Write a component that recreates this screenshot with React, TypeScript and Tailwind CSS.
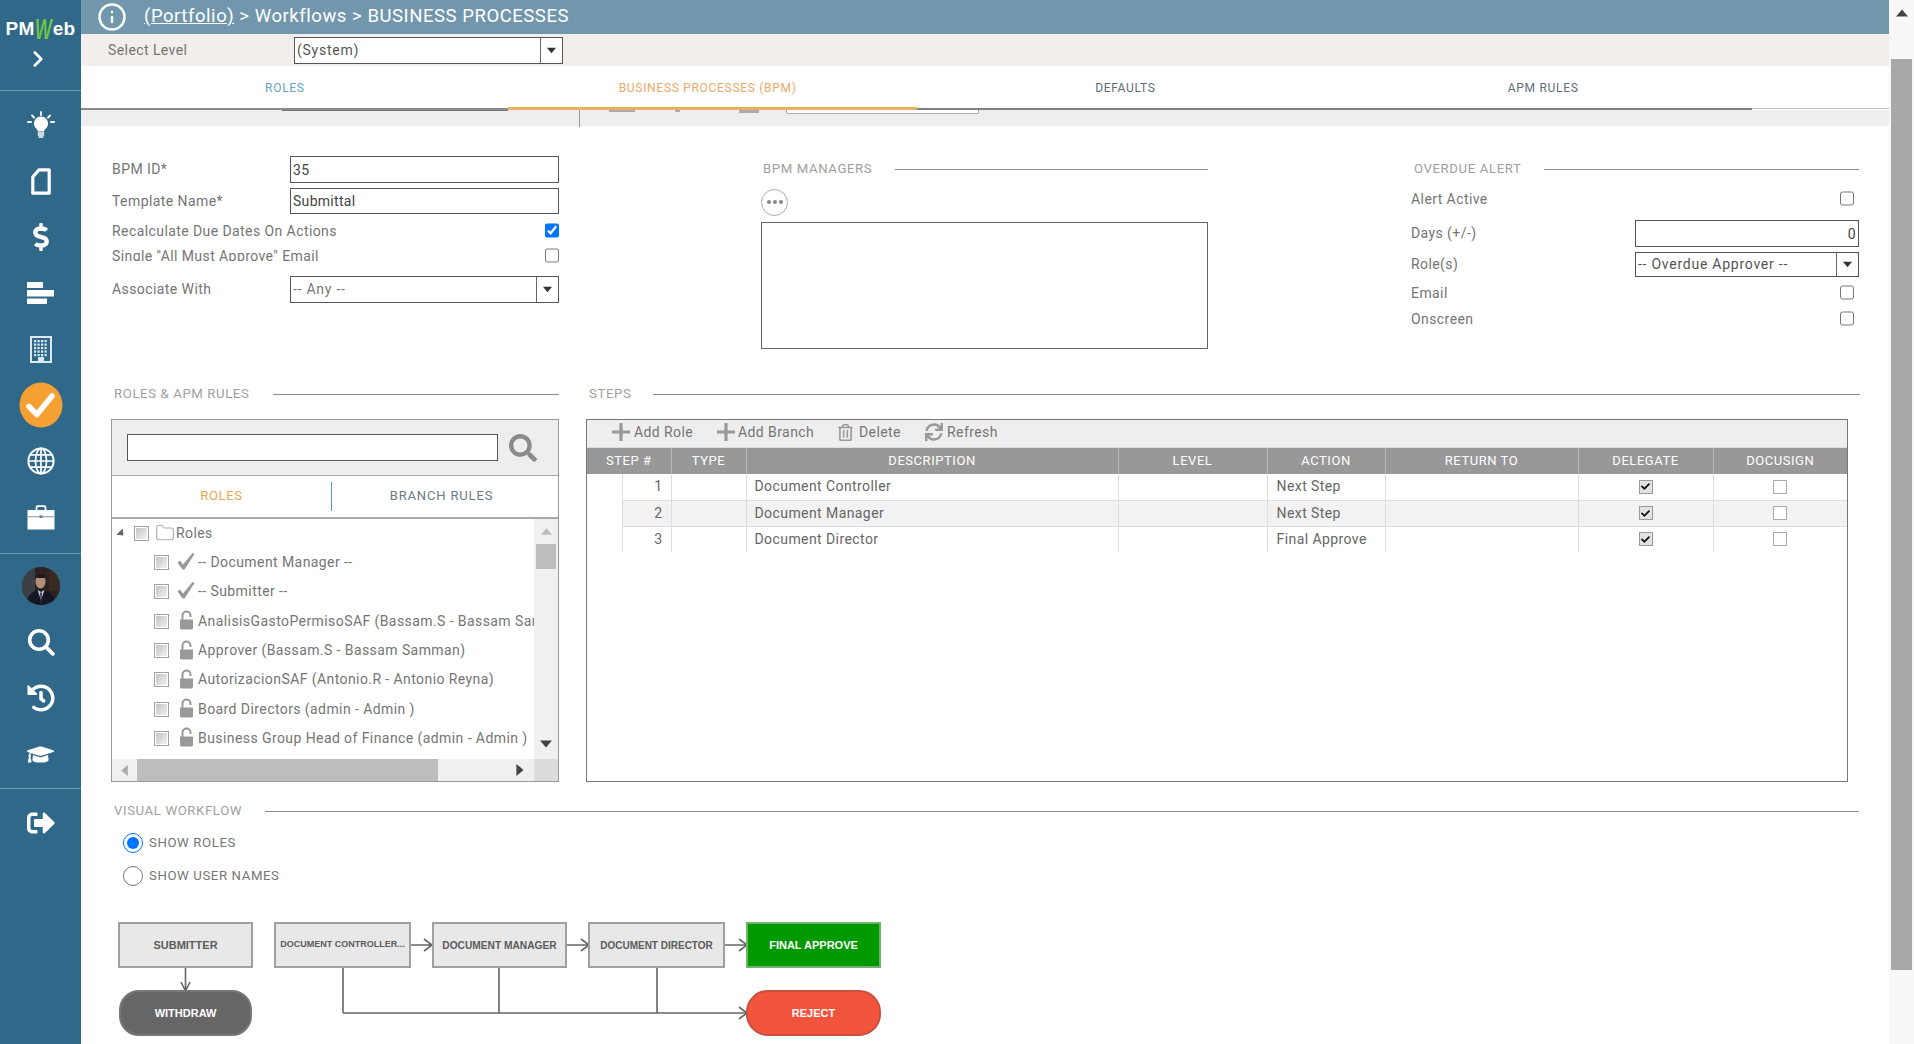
import React from "react";
import { FaDollarSign, FaHistory, FaGraduationCap, FaSignOutAlt, FaSearch, FaRegTrashAlt, FaSync, FaCheck } from "react-icons/fa";
import { Info, Folder, ChevronRight } from "lucide-react";

const font = { fontFamily: "Roboto, 'Liberation Sans', sans-serif" };

function Tri({ dir, cls }: { dir: "up" | "down" | "left" | "right"; cls: string }) {
  const pts = { up: "0,8 5,2 10,8", down: "0,2 10,2 5,8", left: "8,0 8,10 2,5", right: "2,0 2,10 8,5" }[dir];
  return (
    <svg viewBox="0 0 10 10" className={cls}>
      <polygon points={pts} fill="currentColor" />
    </svg>
  );
}

function SideItem({ children }: { children: React.ReactNode }) {
  return <div className="h-[56px] flex items-center justify-center text-white">{children}</div>;
}

function Sidebar() {
  return (
    <div className="w-[81px] shrink-0 bg-[#2f6889] flex flex-col">
      <div className="h-[91px] border-b border-[#6a9ab5] flex flex-col items-center shrink-0">
        <div className="h-[40px] pt-[19px] flex items-center justify-center text-white font-bold text-[19px] tracking-[0.3px]" style={{ fontFamily: "'Liberation Sans', sans-serif" }}>
          <span>PM</span>
          <span className="inline-block text-[#6cc644] italic text-[29px] leading-[27px] w-[18px] scale-x-[0.62] origin-left">W</span>
          <span>eb</span>
        </div>
        <ChevronRight className="w-[26px] h-[26px] text-white mt-[6px] mr-[5px]" strokeWidth={2.4} />
      </div>
      <div className="pt-[6px]">
        <SideItem>
          <svg viewBox="0 0 28 28" className="w-[28px] h-[28px]">
            <g stroke="#fff" strokeWidth="1.8" strokeLinecap="round">
              <path d="M14 1v3M5 4.5l2 2M23 4.5l-2 2M1 11h3M24 11h3" />
            </g>
            <path d="M14 5.5a7 7 0 0 0-4.6 12.3c1 .9 1.3 1.7 1.4 2.7h6.4c.1-1 .4-1.8 1.4-2.7A7 7 0 0 0 14 5.5z" fill="#fff" />
            <path d="M10.8 22h6.4M10.8 24h6.4M11.6 26h4.8" stroke="#fff" strokeWidth="1.3" />
          </svg>
        </SideItem>
        <SideItem>
          <svg viewBox="0 0 20 27" className="w-[20px] h-[27px]">
            <path d="M8 1.8H18.2V25.2H1.8V9Z" fill="none" stroke="#fff" strokeWidth="3.2" strokeLinejoin="round" />
          </svg>
        </SideItem>
        <SideItem><FaDollarSign className="w-[26px] h-[28px]" /></SideItem>
        <SideItem>
          <svg viewBox="0 0 27 22" className="w-[27px] h-[22px]">
            <rect x="0" y="0" width="16" height="6" fill="#fff" />
            <rect x="0" y="8" width="27" height="6.5" fill="#fff" />
            <rect x="0" y="16.5" width="20" height="5.5" fill="#fff" />
          </svg>
        </SideItem>
        <SideItem>
          <svg viewBox="0 0 22 27" className="w-[22px] h-[27px]">
            <rect x="1" y="1" width="20" height="25" fill="none" stroke="#dce8ef" strokeWidth="2" />
            <g fill="#dce8ef">
              {[4, 7.5, 11, 14.5].map((x) =>
                [4, 7.5, 11, 14.5, 18].map((y) => <rect key={`${x}-${y}`} x={x} y={y} width="2.2" height="2.2" />)
              )}
              <rect x="8" y="21" width="6" height="5" />
            </g>
          </svg>
        </SideItem>
        <SideItem>
          <svg viewBox="0 0 44 46" className="w-[44px] h-[46px]">
            <ellipse cx="22" cy="23" rx="21.5" ry="22.5" fill="#f5a033" />
            <path d="M10 24.5l8 8L33 14" fill="none" stroke="#fff" strokeWidth="5.5" strokeLinecap="round" strokeLinejoin="round" />
          </svg>
        </SideItem>
        <SideItem>
          <svg viewBox="0 0 28 28" className="w-[28px] h-[28px]" fill="none" stroke="#fff" strokeWidth="1.7">
            <circle cx="14" cy="14" r="12.6" strokeWidth="2" />
            <ellipse cx="14" cy="14" rx="5.5" ry="12.6" />
            <path d="M14 1.4v25.2M1.4 14h25.2M3 7.8h22M3 20.2h22" />
          </svg>
        </SideItem>
        <SideItem>
          <svg viewBox="0 0 28 25" className="w-[28px] h-[25px]">
            <path d="M9.5 5V2.6a1.4 1.4 0 0 1 1.4-1.4h6.2a1.4 1.4 0 0 1 1.4 1.4V5" fill="none" stroke="#fff" strokeWidth="1.8" />
            <rect x="0.5" y="5" width="27" height="19.5" fill="#fff" />
            <rect x="0.5" y="11" width="27" height="1.4" fill="#9fb4c1" />
            <rect x="12.5" y="10.4" width="3" height="2.6" fill="#5d7f94" />
          </svg>
        </SideItem>
      </div>
      <div className="mt-[8px] h-[5px] border-t border-[#6a9ab5]" />
      <SideItem>
        <svg viewBox="0 0 38 38" className="w-[38px] h-[38px]">
          <defs>
            <clipPath id="av"><circle cx="19" cy="19" r="19" /></clipPath>
            <filter id="avb"><feGaussianBlur stdDeviation="0.6" /></filter>
          </defs>
          <g clipPath="url(#av)">
            <rect width="38" height="38" fill="#2a2320" />
            <g filter="url(#avb)">
              <rect x="0" y="0" width="13" height="38" fill="#3a4045" />
              <rect x="27" y="0" width="11" height="24" fill="#3b2a24" />
              <ellipse cx="18.5" cy="14.5" rx="5" ry="7" fill="#b38d7c" />
              <path d="M13 12c0-6 11-6.500 11.500 0l-1-1.500c-3 .6-6 .8-9.500 0z" fill="#1d1715" />
              <path d="M4 38c1-10 7-15 15-15s14 5 15 15z" fill="#161821" />
              <path d="M15.500 23l3.500 10 3.500-10-3.500 2z" fill="#c5cad8" />
              <path d="M18 25.500l1 12.500 1-12.500z" fill="#2a3556" />
            </g>
          </g>
        </svg>
      </SideItem>
      <SideItem>
        <svg viewBox="0 0 28 28" className="w-[28px] h-[28px]" fill="none" stroke="#fff">
          <circle cx="12" cy="12" r="9.3" strokeWidth="3.6" />
          <path d="M18.8 18.800l7 7" strokeWidth="3.8" strokeLinecap="round" />
        </svg>
      </SideItem>
      <SideItem><FaHistory className="w-[28px] h-[28px]" /></SideItem>
      <SideItem><FaGraduationCap className="w-[27px] h-[27px]" /></SideItem>
      <div className="mt-[6px] h-[7px] border-t border-[#6a9ab5]" />
      <SideItem><FaSignOutAlt className="w-[28px] h-[28px]" /></SideItem>
    </div>
  );
}

function SelectBox({ value, w, h, arrow, dark }: { value: string; w: string; h: string; arrow: string; dark?: boolean }) {
  return (
    <div className={`${w} ${h} border border-[#555] bg-white flex items-center text-[14px] ${dark ? "text-[#555]" : "text-[#777]"}`}>
      <span className="flex-1 pl-[2px] tracking-[0.75px]">{value}</span>
      <span className={`${arrow} h-full border-l border-[#666] flex items-center justify-center text-[#333]`}>
        <Tri dir="down" cls="w-[9px] h-[9px]" />
      </span>
    </div>
  );
}

function Title({ text, cls, gap }: { text: string; cls: string; gap: string }) {
  return (
    <div className={`flex items-center h-[26px] ${cls}`}>
      <span className="text-[13.2px] text-[#a0a0a0] uppercase tracking-[0.6px] whitespace-nowrap">{text}</span>
      <span className={`flex-1 h-px bg-[#8a8a8a] ${gap}`} />
    </div>
  );
}

const labelCls = "text-[14px] text-[#757575] tracking-[0.42px] whitespace-nowrap";
const inputCls = "border border-[#555] bg-white text-[14px] text-[#444] pl-[2px] tracking-[0.3px] outline-none";

function Check({ checked, cls }: { checked?: boolean; cls?: string }) {
  return <input type="checkbox" readOnly checked={!!checked} className={`w-[14px] h-[15px] m-0 ${cls ?? ""}`} />;
}

function TopForm() {
  return (
    <div className="flex pt-[30px] h-[255px]">
      <div className="ml-[31px] w-[447px] shrink-0">
        <div className="flex items-center justify-between h-[27px]">
          <span className={labelCls}>BPM ID*</span>
          <input readOnly value="35" className={`${inputCls} w-[269px] h-[27px]`} />
        </div>
        <div className="flex items-center justify-between h-[26px] mt-[5px]">
          <span className={labelCls}>Template Name*</span>
          <input readOnly value="Submittal" className={`${inputCls} w-[269px] h-[26px]`} />
        </div>
        <div className="flex items-center justify-between h-[34px]">
          <span className={labelCls}>Recalculate Due Dates On Actions</span>
          <Check checked cls="mb-[1px]" />
        </div>
        <div className="flex items-start justify-between h-[16px]">
          <span className={`${labelCls} h-[13px] overflow-hidden leading-[16px]`}>Single "All Must Approve" Email</span>
          <Check />
        </div>
        <div className="flex items-center justify-between h-[27px] mt-[12px]">
          <span className={labelCls}>Associate With</span>
          <SelectBox value="-- Any --" w="w-[269px]" h="h-[27px]" arrow="w-[22px]" />
        </div>
      </div>
      <div className="ml-[202px] w-[447px] shrink-0">
        <Title text="BPM Managers" cls="pl-[2px]" gap="ml-[23px]" />
        <div className="w-[27px] h-[27px] rounded-full border border-[#aaa] mt-[6.5px] flex items-center justify-center gap-[2px]">
          <span className="w-[4px] h-[4px] rounded-full bg-[#888]" />
          <span className="w-[4px] h-[4px] rounded-full bg-[#888]" />
          <span className="w-[4px] h-[4px] rounded-full bg-[#888]" />
        </div>
        <div className="mt-[6.5px] h-[127px] border border-[#666] bg-white" />
      </div>
      <div className="ml-[203px] w-[448px] shrink-0">
        <Title text="Overdue Alert" cls="pl-[3px]" gap="ml-[23px]" />
        <div className="flex items-center justify-between h-[34px] pr-[5px]">
          <span className={labelCls}>Alert Active</span>
          <Check cls="mb-[1px]" />
        </div>
        <div className="flex items-center justify-between h-[27px] mt-[4px]">
          <span className={labelCls}>Days (+/-)</span>
          <input readOnly value="0" className={`${inputCls} w-[224px] h-[27px] text-right pr-[2px]`} />
        </div>
        <div className="flex items-center justify-between h-[25px] mt-[5px]">
          <span className={labelCls}>Role(s)</span>
          <SelectBox value="-- Overdue Approver --" w="w-[224px]" h="h-[25px]" arrow="w-[22px]" dark />
        </div>
        <div className="flex items-center justify-between h-[32px] pr-[5px]">
          <span className={labelCls}>Email</span>
          <Check cls="mb-[1px]" />
        </div>
        <div className="flex items-center justify-between h-[20px] pr-[5px]">
          <span className={labelCls}>Onscreen</span>
          <Check cls="mb-[1px]" />
        </div>
      </div>
    </div>
  );
}

function TreeBox() {
  return (
    <span className="w-[15px] h-[15px] shrink-0 border border-[#a0a0a0] bg-white p-[1px] flex">
      <span className="flex-1 bg-gradient-to-br from-[#c4c4c4] to-[#f2f2f2]" />
    </span>
  );
}

function CheckMark() {
  return (
    <svg viewBox="0 0 18 17" className="w-[18px] h-[17px] text-[#999]">
      <path d="M0.500 9.500L3 7.500L6 11.500L15.500 0L17.500 1L7.500 16.500H5.500Z" fill="currentColor" />
    </svg>
  );
}

function LockOpen() {
  return (
    <svg viewBox="0 0 15 20" className="w-[15px] h-[20px] text-[#999]">
      <path d="M3.500 10V5.500a4 4 0 0 1 8 0V7" fill="none" stroke="currentColor" strokeWidth="2" />
      <path d="M1 9.500H14V18a1.500 1.500 0 0 1-1.500 1.500h-10A1.500 1.500 0 0 1 1 18Z" fill="currentColor" />
    </svg>
  );
}

const treeRows: [string, "check" | "lock"][] = [
  ["-- Document Manager --", "check"],
  ["-- Submitter --", "check"],
  ["AnalisisGastoPermisoSAF (Bassam.S - Bassam Samman)", "lock"],
  ["Approver (Bassam.S - Bassam Samman)", "lock"],
  ["AutorizacionSAF (Antonio.R - Antonio Reyna)", "lock"],
  ["Board Directors (admin - Admin )", "lock"],
  ["Business Group Head of Finance (admin - Admin )", "lock"],
];

function RolesPanel() {
  return (
    <div className="w-[448px] h-[363px] shrink-0 border border-[#999] flex flex-col bg-white">
      <div className="h-[56px] bg-[#eeeeee] border-b border-[#aaa] flex items-center pl-[15px] shrink-0">
        <div className="w-[371px] h-[27px] border border-[#555] bg-white" />
        <FaSearch className="w-[28px] h-[28px] text-[#8a8a8a] ml-[11px]" />
      </div>
      <div className="h-[43px] border-b-2 border-[#aaa] flex items-center shrink-0 pb-[1px]">
        <div className="w-[219px] text-center text-[13px] text-[#eaa850] tracking-[0.7px]">ROLES</div>
        <div className="w-px h-[29px] bg-[#5a95bd]" />
        <div className="flex-1 text-center text-[13px] text-[#6c7a86] tracking-[0.85px] pr-[7px]">BRANCH RULES</div>
      </div>
      <div className="flex h-[240px] shrink-0">
        <div className="w-[422px] overflow-hidden">
          <div className="h-[29px] flex items-center">
            <Tri dir="down" cls="w-[9px] h-[9px] text-[#666] ml-[5px] rotate-[-45deg]" />
            <span className="ml-[8px]"><TreeBox /></span>
            <Folder className="w-[20px] h-[20px] text-[#aaa] ml-[6px] mb-[2px]" strokeWidth={1.3} />
            <span className={`${labelCls} ml-[1px]`}>Roles</span>
          </div>
          {treeRows.map(([t, kind]) => (
            <div key={t} className="h-[29.3px] flex items-center">
              <span className="ml-[42px]"><TreeBox /></span>
              <span className="w-[24px] ml-[5px] flex justify-center shrink-0 mb-[2px]">
                {kind === "check" ? <CheckMark /> : <LockOpen />}
              </span>
              <span className={labelCls}>{t}</span>
            </div>
          ))}
        </div>
        <div className="w-[24px] bg-[#f0f0f0] flex flex-col items-center text-[#bbb]">
          <div className="h-[25px] flex items-center justify-center">
            <Tri dir="up" cls="w-[11px] h-[11px]" />
          </div>
          <div className="w-[20px] h-[25px] bg-[#bdbdbd]" />
          <div className="flex-1 flex items-end pb-[9px] text-[#444]">
            <Tri dir="down" cls="w-[12px] h-[12px]" />
          </div>
        </div>
      </div>
      <div className="flex-1 flex bg-[#f0f0f0]">
        <div className="w-[25px] flex items-center justify-center text-[#aaa]">
          <Tri dir="left" cls="w-[11px] h-[11px]" />
        </div>
        <div className="w-[301px] bg-[#bdbdbd]" />
        <div className="flex-1 flex items-center justify-end pr-[8px] text-[#444]">
          <Tri dir="right" cls="w-[12px] h-[12px]" />
        </div>
        <div className="w-[24px] bg-[#dcdcdc]" />
      </div>
    </div>
  );
}

function Tool({ icon, text, cls, gap }: { icon: React.ReactNode; text: string; cls: string; gap: string }) {
  return (
    <span className={`flex items-center ${cls}`}>
      {icon}
      <span className={`text-[14px] text-[#757575] tracking-[0.42px] ${gap}`}>{text}</span>
    </span>
  );
}

function Plus() {
  return (
    <svg viewBox="0 0 18 18" className="w-[18px] h-[18px]">
      <path d="M9 0v18M0 9h18" stroke="#999" strokeWidth="3.2" />
    </svg>
  );
}

const steps = [
  ["1", "Document Controller", "Next Step"],
  ["2", "Document Manager", "Next Step"],
  ["3", "Document Director", "Final Approve"],
];

function StepsPanel() {
  const th = "font-normal text-white text-[13px] tracking-[0.55px] border-l border-[#bbb] first:border-l-0 h-[26px] p-0";
  const td = "border-l border-[#ddd] p-0 h-[26px] text-[14px] text-[#666] tracking-[0.42px]";
  return (
    <div className="w-[1262px] h-[363px] shrink-0 border border-[#777] bg-white flex flex-col">
      <div className="h-[28px] bg-[#eeeeee] flex items-center pl-[25px] pb-[3px] border-b border-[#ddd] shrink-0">
        <Tool icon={<Plus />} text="Add Role" cls="w-[105px]" gap="ml-[4px]" />
        <Tool icon={<Plus />} text="Add Branch" cls="w-[121px]" gap="ml-[3px]" />
        <Tool icon={<FaRegTrashAlt className="w-[15px] h-[17px] text-[#999]" />} text="Delete" cls="w-[87px]" gap="ml-[6px]" />
        <Tool icon={<FaSync className="w-[18px] h-[18px] text-[#999]" />} text="Refresh" cls="" gap="ml-[4px]" />
      </div>
      <table className="table-fixed w-[1260px] border-collapse">
        <colgroup>
          <col className="w-[35px]" />
          <col className="w-[49px]" />
          <col className="w-[75px]" />
          <col className="w-[372px]" />
          <col className="w-[149px]" />
          <col className="w-[118px]" />
          <col className="w-[193px]" />
          <col className="w-[135px]" />
          <col className="w-[134px]" />
        </colgroup>
        <thead>
          <tr className="bg-[#989898]">
            <th colSpan={2} className={th}>STEP #</th>
            <th className={th}>TYPE</th>
            <th className={th}>DESCRIPTION</th>
            <th className={th}>LEVEL</th>
            <th className={th}>ACTION</th>
            <th className={th}>RETURN TO</th>
            <th className={th}>DELEGATE</th>
            <th className={th}>DOCUSIGN</th>
          </tr>
        </thead>
        <tbody>
          {steps.map(([n, d, a], i) => {
            const alt = i === 1 ? "bg-[#f2f2f2] border-y" : "";
            return (
              <tr key={n}>
                <td className="p-0 h-[26px]" />
                <td className={`${td} text-right pr-[8px] ${alt}`}>{n}</td>
                <td className={`${td} ${alt}`} />
                <td className={`${td} pl-[8px] ${alt}`}>{d}</td>
                <td className={`${td} ${alt}`} />
                <td className={`${td} pl-[9px] ${alt}`}>{a}</td>
                <td className={`${td} ${alt}`} />
                <td className={`${td} ${alt}`}>
                  <span className="w-[14px] h-[14px] mx-auto border border-[#999] bg-[#e2e2e2] flex items-center justify-center">
                    <FaCheck className="w-[9px] h-[9px] text-[#111]" />
                  </span>
                </td>
                <td className={`${td} ${alt}`}>
                  <span className="block w-[14px] h-[14px] mx-auto border border-[#aaa] bg-white" />
                </td>
              </tr>
            );
          })}
        </tbody>
      </table>
    </div>
  );
}

const nodeBase = "absolute h-[46px] flex items-center justify-center border-2 whitespace-nowrap";
const boxCls = `${nodeBase} top-0 bg-[#e8e8e8] border-[#a0a0a0] text-[#5c5c5c] font-bold`;

function Diagram() {
  return (
    <div className="relative h-[121px] mt-[30px]" style={{ fontFamily: "'Liberation Sans', sans-serif" }}>
      <svg className="absolute left-0 top-0 w-[900px] h-[121px]" fill="none" strokeWidth="1.6">
        <g className="stroke-[#666]">
          <path d="M104.500 46V69M100 60l4.500 9 4.500-9" />
          <path d="M329.500 23H351M343 17l8 6-8 6" />
          <path d="M486 23H507.500M500 17l8 6-8 6" />
          <path d="M643.500 23H665M658 17l8 6-8 6" />
          <path d="M262 46V91M418 46V91M576 46V91M262 91H665" />
          <path d="M658 85l8 6-8 6" />
        </g>
      </svg>
      <div className={`${boxCls} left-[37px] w-[135px] text-[11px] pt-[1px]`}>SUBMITTER</div>
      <div className={`${boxCls} left-[193px] w-[137px] text-[9px]`}>DOCUMENT CONTROLLER...</div>
      <div className={`${boxCls} left-[351px] w-[135px] text-[10.2px] pt-[1px]`}>DOCUMENT MANAGER</div>
      <div className={`${boxCls} left-[507px] w-[137px] text-[10px] pt-[1px]`}>DOCUMENT DIRECTOR</div>
      <div className={`${nodeBase} top-0 left-[665px] w-[135px] bg-[#009900] border-[#6fb36f] text-white font-bold text-[11px]`}>FINAL APPROVE</div>
      <div className={`${nodeBase} top-[68px] h-[44px] left-[38px] w-[133px] rounded-[20px] bg-[#666666] border-[#777] text-white font-bold text-[11px]`}>WITHDRAW</div>
      <div className={`${nodeBase} top-[68px] left-[665px] w-[135px] rounded-[22px] bg-[#f2543d] border-[#c9503f] text-white font-bold text-[11px]`}>REJECT</div>
    </div>
  );
}

function Main() {
  return (
    <div className="flex-1 min-w-0 flex flex-col">
      <div className="h-[34px] bg-[#7297ac] flex items-center shrink-0">
        <Info className="w-[30px] h-[30px] text-white ml-[16px]" strokeWidth={2} />
        <div className="ml-[17px] text-[18.5px] text-white tracking-[0.55px] whitespace-nowrap">
          <span className="underline">(Portfolio)</span> &gt; Workflows &gt; BUSINESS PROCESSES
        </div>
      </div>
      <div className="h-[32px] bg-[#f2eeeb] flex items-center shrink-0 pl-[27px]">
        <span className={`${labelCls} w-[186px]`}>Select Level</span>
        <SelectBox value="(System)" w="w-[269px]" h="h-[27px]" arrow="w-[22px]" dark />
      </div>
      <div className="h-[42px] bg-white shrink-0 flex items-center pt-[2px]">
        <div className="w-[1671px] grid grid-cols-4 text-center text-[12px] tracking-[0.7px]">
          <span className="text-[#6a9fc4] pr-[10px]">ROLES</span>
          <span className="text-[#eca968]">BUSINESS PROCESSES (BPM)</span>
          <span className="text-[#5f6d78]">DEFAULTS</span>
          <span className="text-[#5f6d78]">APM RULES</span>
        </div>
      </div>
      <div className="flex shrink-0 h-[2px]">
        <div className="w-[427px] bg-[#8a8a8a]" />
        <div className="w-[409px] bg-[#e8b060] h-[3px] mt-[-1px]" />
        <div className="w-[835px] bg-[#808080]" />
        <div className="flex-1 h-px bg-[#bbb]" />
      </div>
      <div className="h-[16px] bg-[#eeeeee] shrink-0 flex items-start">
        <div className="ml-[201px] w-[226px] h-[1px] bg-[#777]" />
        <div className="ml-[71px] w-px h-[17px] bg-[#999]" />
        <div className="ml-[29px] w-[26px] h-[2px] bg-[#aaa]" />
        <div className="ml-[40px] w-[5px] h-[2px] bg-[#aaa]" />
        <div className="ml-[59px] w-[20px] h-[3px] bg-[#aaa]" />
        <div className="ml-[27px] w-[193px] h-[4px] bg-white border border-t-0 border-[#aaa] rounded-b-[2px]" />
      </div>
      <TopForm />
      <div className="flex">
        <Title text="Roles & APM Rules" cls="ml-[30px] w-[448px] pl-[3px]" gap="ml-[24px]" />
        <Title text="Steps" cls="ml-[28px] w-[1273px] pl-[2px]" gap="ml-[22px]" />
      </div>
      <div className="flex mt-[12px]">
        <div className="ml-[30px]"><RolesPanel /></div>
        <div className="ml-[27px]"><StepsPanel /></div>
      </div>
      <div className="mt-[16px] ml-[33px] w-[1745px]">
        <Title text="Visual Workflow" cls="" gap="ml-[23px]" />
      </div>
      <div className="ml-[42px]">
        <label className="h-[33px] mt-[2px] flex items-center gap-[6px]">
          <input type="radio" name="vw" defaultChecked className="w-[20px] h-[20px] m-0" />
          <span className="text-[13.2px] text-[#757575] tracking-[0.6px]">SHOW ROLES</span>
        </label>
        <label className="h-[33px] flex items-center gap-[6px]">
          <input type="radio" name="vw" className="w-[20px] h-[20px] m-0" />
          <span className="text-[13.2px] text-[#757575] tracking-[0.6px]">SHOW USER NAMES</span>
        </label>
      </div>
      <Diagram />
    </div>
  );
}

function PageScroll() {
  return (
    <div className="w-[25px] shrink-0 bg-[#f8f8f8] flex flex-col items-center">
      <div className="h-[59px] w-full flex justify-center pt-[7px] text-[#444]">
        <Tri dir="up" cls="w-[12px] h-[12px]" />
      </div>
      <div className="w-[21px] h-[911px] bg-[#a8a8a8]" />
    </div>
  );
}

export default function App() {
  return (
    <div className="flex h-[1044px] w-full overflow-hidden bg-white" style={font}>
      <Sidebar />
      <Main />
      <PageScroll />
    </div>
  );
}
